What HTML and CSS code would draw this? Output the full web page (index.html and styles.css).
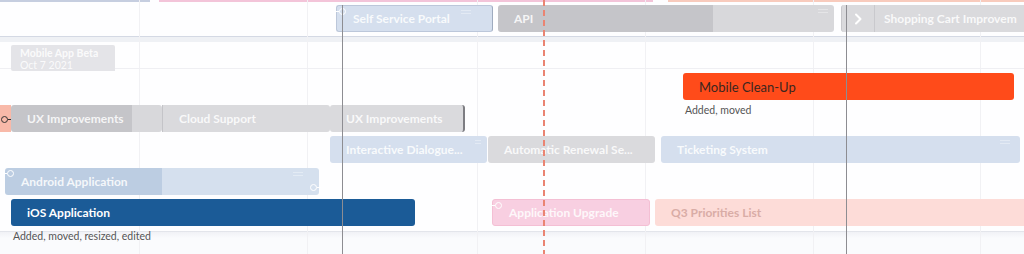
FILE: index.html
```html
<!DOCTYPE html>
<html lang="en">
<head>
<meta charset="UTF-8" />
<meta name="viewport" content="width=device-width, initial-scale=1" />
<title>Roadmap - Timeline</title>
<link rel="stylesheet" href="styles.css">
</head>
<body>
<div class="board">
  <!-- grid lines -->
  <div class="vline faint" style="left:139px"></div>
  <div class="vline faint" style="left:307px"></div>
  <div class="vline faint" style="left:477px"></div>
  <div class="vline faint" style="left:645px"></div>
  <div class="vline faint" style="left:813px"></div>
  <div class="vline faint" style="left:980px"></div>
  <div class="hline" style="top:68px"></div>

  <div class="strip">
    <span class="seg blue" style="width:150px"></span>
    <span class="seg pink" style="margin-left:9px;width:494px"></span>
    <span class="seg salmon" style="margin-left:15px;flex:1"></span>
  </div>

  <div class="lane first">
    <div class="bar lightblue edged" style="left:336px;width:157px">
      <span class="link link-tl"></span>
      <span class="label">Self Service Portal</span>
      <span class="grip" style="right:21px"></span>
    </div>
    <div class="bar grey split" style="left:498px;width:336px;--done:215px">
      <span class="label">API</span>
      <span class="grip" style="right:6px"></span>
    </div>
    <div class="bar grey chev" style="left:841px;width:183px">
      <span class="chevron">
        <svg width="10" height="12" viewBox="0 0 10 12"><path d="M3 1.5 L7.5 6 L3 10.5" fill="none" stroke="#fff" stroke-width="2" stroke-linecap="round" stroke-linejoin="round"/></svg>
      </span>
      <span class="label">Shopping Cart Improvem</span>
    </div>
  </div>

  <div class="divider"></div>

  <div class="lane milestones">
    <div class="milestone">
      <div class="ms-title">Mobile App Beta</div>
      <div class="ms-date">Oct 7 2021</div>
    </div>
  </div>

  <div class="lane">
    <div class="bar orange" style="left:683px;width:331px">
      <span class="label">Mobile Clean-Up</span>
      <span class="note">Added, moved</span>
    </div>
  </div>

  <div class="lane">
    <div class="bar peach" style="left:0;width:11px">
      <span class="dep"></span>
    </div>
    <div class="bar grey split" style="left:11px;width:151px;--done:121px">
      <span class="label">UX Improvements</span>
    </div>
    <div class="bar grey lefted" style="left:162px;width:168px">
      <span class="label">Cloud Support</span>
    </div>
    <div class="bar grey righted" style="left:330px;width:135px">
      <span class="label">UX Improvements</span>
    </div>
  </div>

  <div class="lane">
    <div class="bar lightblue" style="left:330px;width:157px">
      <span class="label">Interactive Dialogue...</span>
      <span class="grip small" style="right:6px"></span>
    </div>
    <div class="bar grey" style="left:488px;width:167px">
      <span class="label">Automatic Renewal Se...</span>
    </div>
    <div class="bar lightblue" style="left:661px;width:359px">
      <span class="label">Ticketing System</span>
      <span class="grip" style="right:10px"></span>
    </div>
  </div>

  <div class="lane">
    <div class="bar lightblue split-blue" style="left:5px;width:314px;--done:157px">
      <span class="link link-tl"></span>
      <span class="label">Android Application</span>
      <span class="grip" style="right:16px"></span>
      <span class="link link-br"></span>
    </div>
  </div>

  <div class="lane">
    <div class="bar navy" style="left:11px;width:404px">
      <span class="label">iOS Application</span>
      <span class="note">Added, moved, resized, edited</span>
    </div>
    <div class="bar pink" style="left:492px;width:158px">
      <span class="link link-tl"></span>
      <span class="label">Application Upgrade</span>
    </div>
    <div class="bar rose" style="left:655px;width:369px">
      <span class="label">Q3 Priorities List</span>
    </div>
  </div>

  <div class="footer-band"></div>

  <div class="vline dark" style="left:342px;top:5px"></div>
  <div class="vline dark" style="left:846px;top:5px"></div>
  <div class="today" style="left:543px"></div>
</div>
</body>
</html>
```

FILE: styles.css
```css
body {
  margin: 0; padding: 0;
  font-family: 'Lato', 'Noto Sans', sans-serif;
  background: #ffffff;
  color: #333;
}
.board {
  position: relative;
  width: 1024px;
  height: 254px;
  overflow: hidden;
  background: #fefeff;
}
.strip {
  display: flex;
  height: 2px;
}
.seg.blue { background: #c6cee0; }
.seg.pink { background: #f3c4d9; }
.seg.salmon { background: #f8cbbd; }

.lane {
  position: relative;
  height: 31.5px;
}
.lane.first {
  height: 27px;
  margin-top: 3px;
}
.lane.milestones {
  height: 28px;
  margin-top: 3px;
}
.divider {
  margin-top: 4px;
  height: 5px;
  border-top: 1px solid #d4d9e4;
  background: #eff1f5;
}

.bar {
  position: absolute;
  top: 0;
  height: 27px;
  box-sizing: border-box;
  border-radius: 3px;
  display: flex;
  align-items: center;
  padding-left: 16px;
  white-space: nowrap;
}
.label {
  position: relative;
  font-size: 12px;
  font-weight: 700;
  color: rgba(255,255,255,0.85);
}
.bar.lightblue { background: #d5dfee; }
.bar.lightblue.edged { border: 1px solid #bcc7da; border-right-color: #9fabbf; }
.bar.split-blue {
  background: linear-gradient(to right, #bccde2 var(--done), #d5e0ee var(--done));
}
.bar.grey { background: #dadadd; }
.bar.split {
  background: linear-gradient(to right, #c5c5c9 var(--done), #d8d8db var(--done));
}
.bar.lefted { border-left: 1px solid #c4c4c8; border-radius: 0 3px 3px 0; }
.bar.righted { border-right: 2px solid #7d7d82; }
.bar.chev {
  padding-left: 0;
  border-radius: 3px 0 0 3px;
  border-left: 1px solid #c8c8cc;
}
.chevron {
  width: 32px;
  height: 27px;
  display: flex;
  align-items: center;
  justify-content: center;
  border-right: 1px solid #c9c9cd;
  margin-right: 9px;
}
.bar.orange { background: #ff4b1a; }
.bar.orange .label {
  font-size: 13px;
  font-weight: 400;
  color: #3a2620;
}
.bar.peach {
  background: #f8b9a9;
  border-radius: 0;
  padding: 0;
}
.bar.navy { background: #1b5b97; }
.bar.navy .label { color: #ffffff; }
.bar.pink {
  background: #f8cfe1;
  border: 1px solid #f4bfd4;
}
.bar.rose {
  background: #fddcd8;
  border-radius: 3px 0 0 3px;
}
.bar.rose .label {
  color: #d9aca6;
}

.note {
  position: absolute;
  left: 2px;
  top: 31px;
  font-size: 10.5px;
  color: #555;
}

.grip {
  position: absolute;
  top: 4px;
  width: 10px;
  height: 2px;
  border-top: 1px solid rgba(255,255,255,0.35);
  border-bottom: 1px solid rgba(255,255,255,0.35);
}
.grip.small { width: 6px; }

.link {
  position: absolute;
  width: 5px;
  height: 5px;
  border: 1px solid #fff;
  border-radius: 50%;
}
.link::before {
  content: "";
  position: absolute;
  top: 2px;
  width: 4px;
  height: 1px;
  background: #fff;
}
.link-tl { left: 2px; top: 2px; }
.link-tl::before { left: -5px; }
.link-br { right: 2px; bottom: 4px; }
.link-br::before { right: -5px; }
.dep {
  position: absolute;
  left: 1px;
  top: 11px;
  width: 5px;
  height: 5px;
  border: 1px solid #333;
  border-radius: 50%;
}
.dep::after {
  content: "";
  position: absolute;
  left: 6px;
  top: 2px;
  width: 4px;
  height: 1px;
  background: #333;
}

.milestone {
  position: absolute;
  left: 11px;
  top: 0;
  width: 104px;
  height: 26px;
  box-sizing: border-box;
  padding: 2px 0 0 9px;
  background: #e4e4e8;
  border-radius: 2px 2px 0 2px;
  color: rgba(255,255,255,0.85);
  font-size: 10.5px;
  font-weight: 700;
  line-height: 12px;
}
.ms-date { font-weight: 400; }

.footer-band {
  height: 24px;
  border-top: 1px solid #e3e5eb;
  background: linear-gradient(#f1f2f6, #fafbfd 6px);
}

.vline {
  position: absolute;
  top: 0;
  bottom: 0;
  width: 1px;
}
.vline.faint { background: #f1f1f4; }
.vline.dark { background: #8d8d92; z-index: 2; }
.hline {
  position: absolute;
  left: 0;
  right: 0;
  height: 1px;
  background: #efeff3;
}
.today {
  position: absolute;
  top: 0;
  bottom: 0;
  width: 2px;
  z-index: 3;
  background: repeating-linear-gradient(to bottom, #ea8472 0 6px, transparent 6px 10px);
}
```
